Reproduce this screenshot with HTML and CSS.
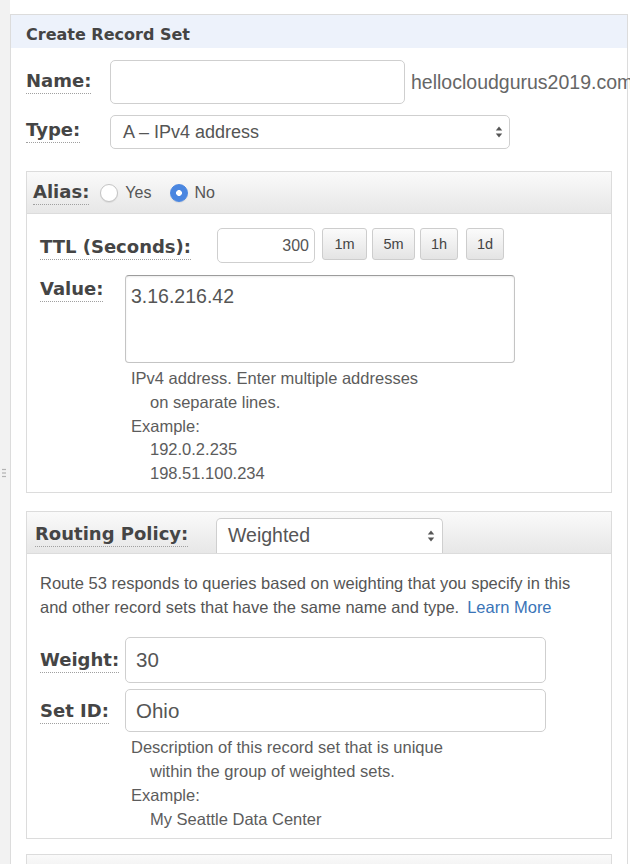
FILE: index.html
```html
<!DOCTYPE html>
<html lang="en">
<head>
<meta charset="utf-8">
<title>Create Record Set</title>
<link rel="stylesheet" href="styles.css">
</head>
<body>
<div class="layout">
  <div class="gutter">
    <svg class="grip" width="4" height="10" viewBox="0 0 4 10"><circle cx="1" cy="1.5" r="0.8"/><circle cx="1" cy="5" r="0.8"/><circle cx="1" cy="8.5" r="0.8"/><circle cx="3" cy="1.5" r="0.8"/><circle cx="3" cy="5" r="0.8"/><circle cx="3" cy="8.5" r="0.8"/></svg>
  </div>
  <div class="panel">
    <div class="panel-head">Create Record Set</div>
    <div class="panel-body">
      <div class="row row-name">
        <div class="lbl-col col-84"><span class="lbl lbl-name">Name:</span></div>
        <input class="field name-input" type="text" value="">
        <span class="suffix">hellocloudgurus2019.com</span>
      </div>
      <div class="row row-type">
        <div class="lbl-col col-84"><span class="lbl lbl-type">Type:</span></div>
        <div class="select type-select">
          <span class="select-text">A – IPv4 address</span>
          <svg class="arrows" width="8" height="14" viewBox="0 0 8 14"><path d="M4 1.5 7.2 5.6H0.8Z"/><path d="M0.8 8.4H7.2L4 12.5Z"/></svg>
        </div>
      </div>

      <section class="box alias-box">
        <div class="box-head alias-head">
          <span class="lbl">Alias:</span>
          <span class="radio radio-yes"></span><span class="radio-text">Yes</span>
          <span class="radio radio-no checked"></span><span class="radio-text radio-text-no">No</span>
        </div>
        <div class="box-body alias-body">
          <div class="row ttl-row">
            <div class="lbl-col col-177"><span class="lbl lbl-ttl">TTL (Seconds):</span></div>
            <input class="field ttl-input" type="text" value="300">
            <div class="ttl-buttons">
              <button class="btn btn-1m">1m</button>
              <button class="btn btn-5m">5m</button>
              <button class="btn btn-1h">1h</button>
              <button class="btn btn-1d">1d</button>
            </div>
          </div>
          <div class="row value-row">
            <div class="lbl-col col-85"><span class="lbl lbl-value">Value:</span></div>
            <div class="field-col">
              <textarea class="value-area">3.16.216.42</textarea>
              <div class="help">
                <div>IPv4 address. Enter multiple addresses</div>
                <div class="indent">on separate lines.</div>
                <div>Example:</div>
                <div class="indent">192.0.2.235</div>
                <div class="indent">198.51.100.234</div>
              </div>
            </div>
          </div>
        </div>
      </section>

      <section class="box routing-box">
        <div class="box-head routing-head">
          <div class="lbl-col col-181"><span class="lbl lbl-routing">Routing Policy:</span></div>
          <div class="select routing-select">
            <span class="select-text">Weighted</span>
            <svg class="arrows" width="8" height="14" viewBox="0 0 8 14"><path d="M4 1.5 7.2 5.6H0.8Z"/><path d="M0.8 8.4H7.2L4 12.5Z"/></svg>
          </div>
        </div>
        <div class="box-body routing-body">
          <p class="desc">Route 53 responds to queries based on weighting that you specify in this<br>and other record sets that have the same name and type.<a class="link" href="#">Learn More</a></p>
          <div class="row weight-row">
            <div class="lbl-col col-85"><span class="lbl lbl-weight">Weight:</span></div>
            <input class="field big-input weight-input" type="text" value="30">
          </div>
          <div class="row setid-row">
            <div class="lbl-col col-85"><span class="lbl lbl-setid">Set ID:</span></div>
            <div class="field-col">
              <input class="field big-input setid-input" type="text" value="Ohio">
              <div class="help">
                <div>Description of this record set that is unique</div>
                <div class="indent">within the group of weighted sets.</div>
                <div>Example:</div>
                <div class="indent">My Seattle Data Center</div>
              </div>
            </div>
          </div>
        </div>
      </section>

      <section class="box next-box">
        <div class="box-head next-head"></div>
      </section>
    </div>
  </div>
</div>
</body>
</html>
```

FILE: styles.css
```css
html, body {
  margin: 0;
  padding: 0;
  background: #ffffff;
}
body {
  height: 864px;
  overflow: hidden;
  font-family: "Liberation Sans", Arial, sans-serif;
  color: #555;
}
.layout {
  display: flex;
  min-height: 864px;
}
.gutter {
  width: 10px;
  flex: none;
  background: #f2f2f2;
}
.grip {
  display: block;
  margin: 468px 0 0 2px;
  fill: #9a9a9a;
}
.panel {
  flex: none;
  width: 618px;
  box-sizing: border-box;
  margin-top: 14px;
  border: 1px solid #dcdcdc;
  border-bottom: 0;
  background: #fff;
}
.panel-head {
  height: 33px;
  box-sizing: border-box;
  padding: 8px 0 0 15px;
  line-height: 24px;
  background: #edf2fb;
  font-family: "DejaVu Sans", Verdana, sans-serif;
  font-weight: bold;
  font-size: 16px;
  color: #444;
}
.panel-body {
  padding: 12px 15px 0 15px;
}
.row {
  display: flex;
  align-items: flex-start;
}
.lbl-col {
  flex: none;
}
.col-84 { width: 84px; }
.col-85 { width: 85px; }
.col-177 { width: 177px; }
.col-181 { width: 181px; }
.lbl {
  display: inline-block;
  font-family: "DejaVu Sans", Verdana, sans-serif;
  font-weight: bold;
  font-size: 18px;
  line-height: 18px;
  color: #454545;
  padding-bottom: 3px;
  border-bottom: 1px dotted #a0a0a0;
}
.lbl-name { margin-top: 12px; }
.lbl-type { margin-top: 6px; }
.lbl-ttl { margin-top: 10px; }
.lbl-value { margin-top: 5px; }
.lbl-weight { margin-top: 14px; }
.lbl-setid { margin-top: 13px; }
.lbl-routing { margin-top: 13px; }

.field {
  box-sizing: border-box;
  border: 1px solid #cfcfcf;
  border-radius: 5px;
  background: #fff;
  font-family: "Liberation Sans", Arial, sans-serif;
  color: #555;
  margin: 0;
  outline: none;
}
.name-input {
  width: 295px;
  height: 44px;
  flex: none;
}
.suffix {
  flex: none;
  margin-left: 6px;
  margin-top: 11px;
  font-size: 19.5px;
  line-height: 22px;
  color: #666;
  white-space: nowrap;
}
.row-type {
  margin-top: 11px;
}
.select {
  display: flex;
  align-items: center;
  justify-content: space-between;
  box-sizing: border-box;
  border: 1px solid #cfcfcf;
  border-radius: 5px;
  background: #fff;
  flex: none;
}
.select-text {
  color: #555;
  white-space: nowrap;
}
.arrows {
  fill: #555;
  flex: none;
}
.type-select {
  width: 400px;
  height: 34px;
  padding: 0 6px 0 12px;
  font-size: 18px;
}

.box {
  border: 1px solid #dcdcdc;
  background: #fff;
}
.alias-box {
  margin-top: 22px;
}
.box-head {
  display: flex;
  box-sizing: border-box;
  height: 42px;
  border-bottom: 1px solid #dcdcdc;
  background: linear-gradient(#fafafa, #e7e7e7);
}
.alias-head {
  align-items: center;
  padding-left: 6px;
}
.alias-head .lbl {
  margin-top: 2px;
}
.radio {
  flex: none;
  width: 18px;
  height: 18px;
  box-sizing: border-box;
  border-radius: 50%;
  border: 1px solid #c4c4c4;
  background: #fff;
  box-shadow: 0 1px 1px rgba(0,0,0,0.08);
}
.radio-yes {
  margin-left: 11px;
}
.radio-no {
  margin-left: 19px;
}
.radio.checked {
  border-color: #4a86e0;
  background: radial-gradient(circle, #ffffff 0 2.6px, #4a86e0 3.2px);
}
.radio-text {
  margin-left: 7px;
  font-size: 16px;
  color: #555;
}
.radio-text-no {
  margin-left: 6px;
}
.box-body {
  padding: 14px 13px 6px 13px;
}
.ttl-input {
  flex: none;
  width: 98px;
  height: 35px;
  padding: 0 5px 0 0;
  text-align: right;
  font-size: 16px;
}
.ttl-buttons {
  display: flex;
  gap: 5px;
  margin-left: 7px;
}
.btn {
  box-sizing: border-box;
  height: 32px;
  padding: 0;
  border: 1px solid #cdcdcd;
  border-radius: 3px;
  background: linear-gradient(#fbfbfb, #e4e4e4);
  font-family: "Liberation Sans", Arial, sans-serif;
  font-size: 14.5px;
  color: #444;
}
.btn-1m { width: 45px; }
.btn-5m { width: 43px; }
.btn-1h { width: 38px; }
.btn-1d { width: 38px; margin-left: 3px; }

.value-row {
  margin-top: 12px;
}
.field-col {
  display: flex;
  flex-direction: column;
}
.value-area {
  display: block;
  box-sizing: border-box;
  width: 390px;
  height: 88px;
  margin: 0;
  padding: 9px 5px;
  border: 1px solid #c4c4c4;
  border-top-color: #9c9c9c;
  border-radius: 4px;
  box-shadow: inset 0 1px 2px rgba(0,0,0,0.08);
  resize: none;
  outline: none;
  font-family: "Liberation Sans", Arial, sans-serif;
  font-size: 19.5px;
  line-height: 23px;
  color: #555;
}
.help {
  margin-top: 4px;
  padding-left: 6px;
  font-size: 16.5px;
  line-height: 23.75px;
  color: #5c5c5c;
  white-space: nowrap;
}
.indent {
  padding-left: 19px;
}

.routing-box {
  margin-top: 18px;
}
.routing-head {
  align-items: flex-start;
  padding-left: 8px;
}
.routing-select {
  align-self: flex-end;
  width: 227px;
  height: 35px;
  padding: 0 7px 0 11px;
  border-bottom: 0;
  border-radius: 5px 5px 0 0;
  font-size: 19.5px;
}
.routing-body {
  padding: 18px 13px 7px 13px;
}
.desc {
  margin: 0;
  font-size: 16.5px;
  line-height: 23.75px;
  color: #555;
  white-space: nowrap;
}
.link {
  margin-left: 8px;
  color: #3a74b7;
  text-decoration: none;
}
.weight-row {
  margin-top: 18px;
}
.big-input {
  flex: none;
  width: 421px;
  padding: 0 10px;
  font-size: 20.5px;
}
.weight-input {
  height: 46px;
}
.setid-row {
  margin-top: 6px;
}
.setid-input {
  height: 43px;
}
.next-box {
  margin-top: 15px;
  border-bottom: 0;
}
.next-head {
  height: 30px;
  border-bottom: 0;
}
```
